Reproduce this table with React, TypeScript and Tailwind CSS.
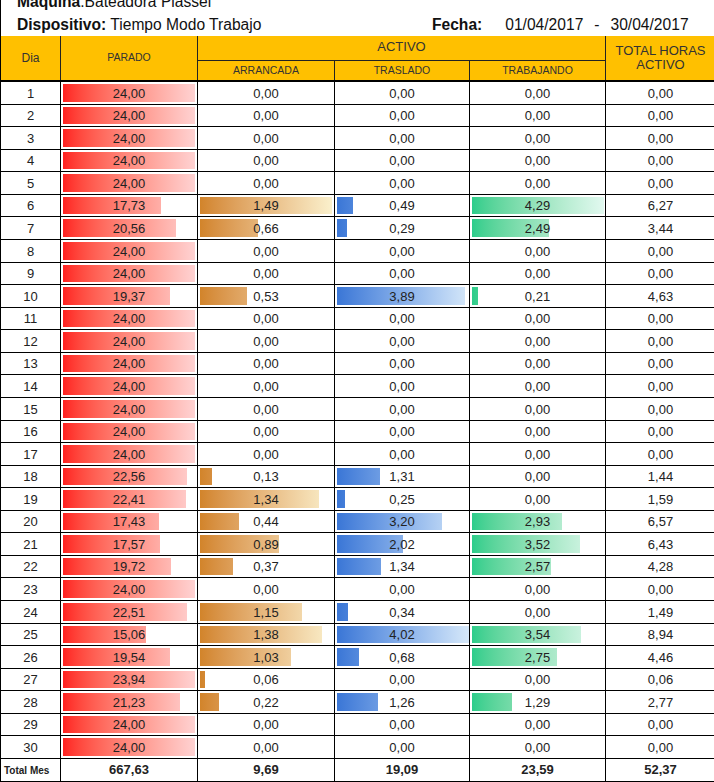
import React from 'react';

type Row = [number, number, number, number, number, number];

const data: Row[] = [
  [1, 24, 0, 0, 0, 0],
  [2, 24, 0, 0, 0, 0],
  [3, 24, 0, 0, 0, 0],
  [4, 24, 0, 0, 0, 0],
  [5, 24, 0, 0, 0, 0],
  [6, 17.73, 1.49, 0.49, 4.29, 6.27],
  [7, 20.56, 0.66, 0.29, 2.49, 3.44],
  [8, 24, 0, 0, 0, 0],
  [9, 24, 0, 0, 0, 0],
  [10, 19.37, 0.53, 3.89, 0.21, 4.63],
  [11, 24, 0, 0, 0, 0],
  [12, 24, 0, 0, 0, 0],
  [13, 24, 0, 0, 0, 0],
  [14, 24, 0, 0, 0, 0],
  [15, 24, 0, 0, 0, 0],
  [16, 24, 0, 0, 0, 0],
  [17, 24, 0, 0, 0, 0],
  [18, 22.56, 0.13, 1.31, 0, 1.44],
  [19, 22.41, 1.34, 0.25, 0, 1.59],
  [20, 17.43, 0.44, 3.2, 2.93, 6.57],
  [21, 17.57, 0.89, 2.02, 3.52, 6.43],
  [22, 19.72, 0.37, 1.34, 2.57, 4.28],
  [23, 24, 0, 0, 0, 0],
  [24, 22.51, 1.15, 0.34, 0, 1.49],
  [25, 15.06, 1.38, 4.02, 3.54, 8.94],
  [26, 19.54, 1.03, 0.68, 2.75, 4.46],
  [27, 23.94, 0.06, 0, 0, 0.06],
  [28, 21.23, 0.22, 1.26, 1.29, 2.77],
  [29, 24, 0, 0, 0, 0],
  [30, 24, 0, 0, 0, 0],
];

const fmt = (v: number) => v.toFixed(2).replace('.', ',');

const bars = [
  { max: 24, grad: 'from-[#ff1f1f] to-[#ffd2d2]' },
  { max: 1.49, grad: 'from-[#d2842a] to-[#faf0cc]' },
  { max: 4.02, grad: 'from-[#3a76d6] to-[#d6e8f9]' },
  { max: 4.29, grad: 'from-[#2ccd8b] to-[#e2f9f0]' },
];

const cols = 'grid grid-cols-[60px_137px_137px_135px_136px_110px]';

function BarCell({ v, max, grad }: { v: number; max: number; grad: string }) {
  const w = Math.round((v / max) * 132);
  return (
    <div className="relative border-r border-black flex items-center justify-center pt-[1px]">
      {v > 0 && (
        <div
          className={`absolute left-[2px] top-[2px] bottom-[2px] bg-linear-to-r ${grad} bg-[length:132px_100%] bg-no-repeat`}
          style={{ width: w }}
        />
      )}
      <span className="relative">{fmt(v)}</span>
    </div>
  );
}

export default function App() {
  const step = 677 / 30;
  return (
    <div className="w-[714px] h-[782px] overflow-hidden bg-white font-['Liberation_Sans',Arial,sans-serif]">
      <div className="w-[716px] border-l border-black">
        <div className="-mt-[10px] pl-[16px] text-[15.6px] leading-[23px] text-[#111]">
          <div>
            <span className="font-bold">Maquina</span>:Bateadora Plassel
          </div>
          <div className="flex">
            <div className="w-[415px]">
              <span className="font-bold">Dispositivo:</span> Tiempo Modo Trabajo
            </div>
            <span className="font-bold">Fecha:</span>
            <span className="ml-[23px]">01/04/2017</span>
            <span className="ml-[11px]">-</span>
            <span className="ml-[11px]">30/04/2017</span>
          </div>
        </div>

        <div className={`${cols} grid-rows-[25px_19px] bg-[#ffc000] border-b-2 border-black text-[#333]`}>
          <div className="col-start-1 row-start-1 row-span-2 border-r border-[#222] flex items-center justify-center text-[12px]">
            Dia
          </div>
          <div className="col-start-2 row-start-1 row-span-2 border-r border-[#222] flex items-center justify-center text-[10.5px]">
            PARADO
          </div>
          <div className="col-start-3 col-span-3 row-start-1 border-r border-b border-[#222] flex items-center justify-center text-[13px] pb-[2px]">
            ACTIVO
          </div>
          <div className="col-start-6 row-start-1 row-span-2 border-r border-[#222] flex items-center justify-center text-center text-[13px] leading-[14px]">
            TOTAL HORAS
            <br />
            ACTIVO
          </div>
          <div className="col-start-3 row-start-2 border-r border-[#222] flex items-center justify-center text-[10.5px]">
            ARRANCADA
          </div>
          <div className="col-start-4 row-start-2 border-r border-[#222] flex items-center justify-center text-[10.5px]">
            TRASLADO
          </div>
          <div className="col-start-5 row-start-2 border-r border-[#222] flex items-center justify-center text-[10.5px]">
            TRABAJANDO
          </div>
        </div>

        {data.map((r, i) => {
          const h = Math.round(82 + (i + 1) * step) - Math.round(82 + i * step);
          return (
            <div
              key={r[0]}
              className={`${cols} ${h === 23 ? 'h-[23px]' : 'h-[22px]'} border-b border-black text-[13px] text-[#222]`}
            >
              <div className="border-r border-black flex items-center justify-center pt-[1px]">{r[0]}</div>
              {bars.map((b, k) => (
                <BarCell key={k} v={r[k + 1]} max={b.max} grad={b.grad} />
              ))}
              <div className="border-r border-black flex items-center justify-center pt-[1px]">{fmt(r[5])}</div>
            </div>
          );
        })}

        <div className={`${cols} h-[23px] border-b border-black font-bold text-[#222]`}>
          <div className="border-r border-black flex items-center pl-[3px] text-[10px]">Total Mes</div>
          <div className="border-r border-black flex items-center justify-center text-[13px]">667,63</div>
          <div className="border-r border-black flex items-center justify-center text-[13px]">9,69</div>
          <div className="border-r border-black flex items-center justify-center text-[13px]">19,09</div>
          <div className="border-r border-black flex items-center justify-center text-[13px]">23,59</div>
          <div className="border-r border-black flex items-center justify-center text-[13px]">52,37</div>
        </div>
      </div>
    </div>
  );
}
